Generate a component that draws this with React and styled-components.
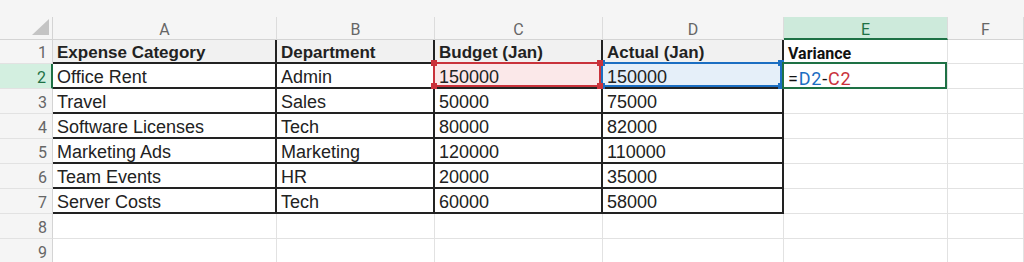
import React from 'react';
import styled, { createGlobalStyle, css } from 'styled-components';

const GlobalStyle = createGlobalStyle`
    body {
        margin: 0;
        background: #ffffff;
        font-family: 'Liberation Sans', Arial, sans-serif;
    }
`;

const GREEN = '#1e7145';
const GRID = '#e2e2e2';
const INK = '#222222';
const RED = '#c9323b';
const BLUE = '#1b6ec2';

const Sheet = styled.div`
    display: grid;
    grid-template-columns: 53px 224px 158px 168px 181px 164px 1fr;
    grid-template-rows: 17px 23px 24px repeat(8, 25px);
    width: 1024px;
    height: 262px;
    overflow: hidden;
    background: #ffffff;
`;

const TopStrip = styled.div`
    grid-column: 1 / -1;
    background: #f5f5f5;
`;

const Corner = styled.div`
    background: #f5f5f5;
    border-right: 1px solid #d4d4d4;
    border-bottom: 1px solid #d4d4d4;
    display: flex;
    align-items: flex-end;
    justify-content: flex-end;
    padding: 0 3px 4px 0;
    box-sizing: border-box;
`;

const ColHeader = styled.div`
    box-sizing: border-box;
    display: flex;
    align-items: center;
    justify-content: center;
    background: ${p => (p.$selected ? '#cdeadb' : '#f5f5f5')};
    color: ${p => (p.$selected ? GREEN : '#666666')};
    border-right: 1px solid #dcdcdc;
    border-bottom: ${p => (p.$selected ? `2px solid ${GREEN}` : '1px solid #d4d4d4')};
    font-family: Roboto, 'Liberation Sans', sans-serif;
    font-size: 16px;
    padding-top: 3px;
`;

const RowHeader = styled.div`
    box-sizing: border-box;
    display: flex;
    align-items: center;
    justify-content: flex-end;
    padding: 2px 5px 0 0;
    background: ${p => (p.$selected ? '#d3efe0' : '#f5f5f5')};
    color: ${p => (p.$selected ? GREEN : '#666666')};
    border-bottom: 1px solid ${GRID};
    border-right: ${p => (p.$selected ? `2px solid ${GREEN}` : '1px solid #d4d4d4')};
    font-family: Roboto, 'Liberation Sans', sans-serif;
    font-size: 16px;
`;

const Cell = styled.div`
    position: relative;
    box-sizing: border-box;
    display: flex;
    align-items: center;
    padding: 4px 0 0 4px;
    white-space: nowrap;
    color: ${INK};
    font-size: 18px;
    background: ${p => p.$fill || '#ffffff'};
    border-right: 1px solid ${GRID};
    border-bottom: 1px solid ${GRID};
    ${p => p.$table && css`
        border-right: 2px solid ${INK};
        border-bottom: 2px solid ${INK};
    `}
    ${p => p.$head && css`
        font-weight: bold;
        font-size: 17px;
        background: #f1f1f1;
    `}
`;

const VarianceHead = styled.span`
    font-family: Roboto, 'Liberation Sans', sans-serif;
    font-weight: bold;
    font-size: 16px;
    color: #111111;
`;

const Formula = styled.span`
    font-family: Roboto, 'Liberation Sans', sans-serif;
    font-size: 18px;
    letter-spacing: 0.8px;
    color: #111111;
`;

const Ref = styled.span`
    color: ${p => p.$color};
`;

const Frame = styled.div`
    position: absolute;
    top: -2px;
    left: -2px;
    right: 0;
    bottom: ${p => p.$bottom || '0'};
    border: 2px solid ${p => p.$color};
    z-index: ${p => p.$z};
    pointer-events: none;
`;

const Handle = styled.span`
    position: absolute;
    width: 6px;
    height: 6px;
    background: ${p => p.$color};
    ${p => (p.$top ? 'top: -4px;' : 'bottom: -4px;')}
    ${p => (p.$left ? 'left: -4px;' : 'right: -4px;')}
`;

const columns = ['A', 'B', 'C', 'D', 'E', 'F'];

const rows = [
    ['Office Rent', 'Admin', '150000', '150000'],
    ['Travel', 'Sales', '50000', '75000'],
    ['Software Licenses', 'Tech', '80000', '82000'],
    ['Marketing Ads', 'Marketing', '120000', '110000'],
    ['Team Events', 'HR', '20000', '35000'],
    ['Server Costs', 'Tech', '60000', '58000'],
];

const Handles = ({ color }) => (
    <>
        <Handle $color={color} $top $left />
        <Handle $color={color} $top />
        <Handle $color={color} $left />
        <Handle $color={color} />
    </>
);

const App = () => {
    return (
        <>
            <GlobalStyle />
            <Sheet>
                <TopStrip />
                <Corner>
                    <svg width="17" height="16" viewBox="0 0 17 16">
                        <polygon points="17,0 17,16 0,16" fill="#c4c4c4" />
                    </svg>
                </Corner>
                {columns.map(c => (
                    <ColHeader key={c} $selected={c === 'E'}>{c}</ColHeader>
                ))}

                <RowHeader>1</RowHeader>
                <Cell $table $head>Expense Category</Cell>
                <Cell $table $head>Department</Cell>
                <Cell $table $head>Budget (Jan)</Cell>
                <Cell $table $head>Actual (Jan)</Cell>
                <Cell><VarianceHead>Variance</VarianceHead></Cell>
                <Cell />

                {rows.map((r, i) => {
                    const n = i + 2;
                    const active = n === 2;
                    return (
                        <React.Fragment key={n}>
                            <RowHeader $selected={active}>{n}</RowHeader>
                            <Cell $table>{r[0]}</Cell>
                            <Cell $table>{r[1]}</Cell>
                            <Cell $table $fill={active ? '#fbe8e9' : undefined}>
                                {r[2]}
                                {active && <Frame $color={RED} $z={3}><Handles color={RED} /></Frame>}
                            </Cell>
                            <Cell $table $fill={active ? '#e5eff9' : undefined}>
                                {r[3]}
                                {active && <Frame $color={BLUE} $z={2}><Handles color={BLUE} /></Frame>}
                            </Cell>
                            <Cell>
                                {active && (
                                    <>
                                        <Formula>
                                            =<Ref $color={BLUE}>D2</Ref>-<Ref $color={RED}>C2</Ref>
                                        </Formula>
                                        <Frame $color={GREEN} $z={4} $bottom="-1px" />
                                    </>
                                )}
                            </Cell>
                            <Cell />
                        </React.Fragment>
                    );
                })}

                {[8, 9].map(n => (
                    <React.Fragment key={n}>
                        <RowHeader>{n}</RowHeader>
                        {columns.map(c => <Cell key={c} />)}
                    </React.Fragment>
                ))}
            </Sheet>
        </>
    );
};

export default App;
